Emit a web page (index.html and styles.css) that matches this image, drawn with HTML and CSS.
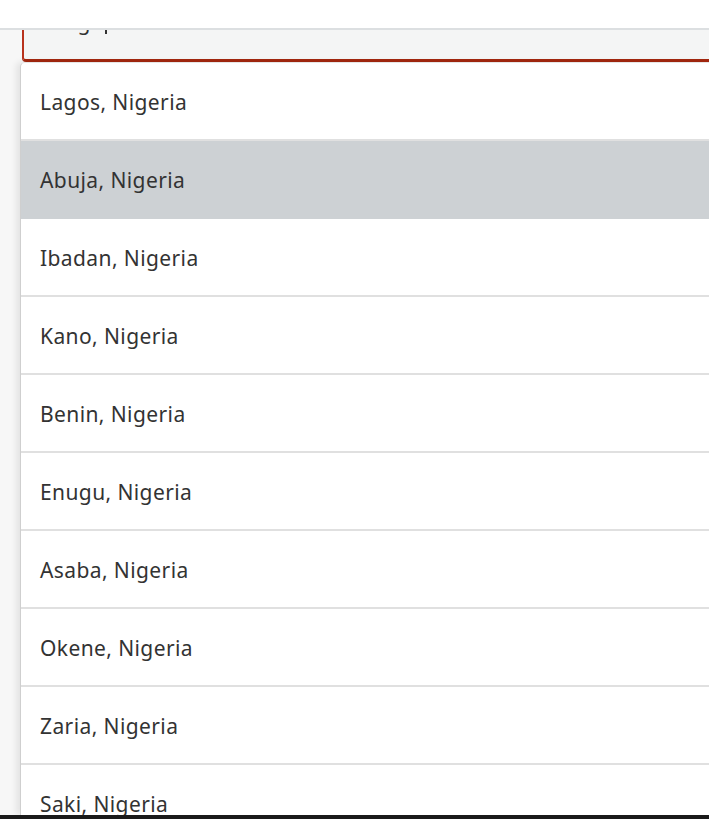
FILE: index.html
```html
<!DOCTYPE html>
<html lang="en">
<head>
  <meta charset="UTF-8" />
  <meta name="viewport" content="width=device-width, initial-scale=1.0"/>
  <title>Location search</title>
  <link rel="stylesheet" href="styles.css">
</head>
<body>

  <!-- top bar -->
  <div class="topbar"></div>

  <!-- search field (top half hidden under the bar) -->
  <div class="field-wrap">
    <div class="field">
      <span class="field-text">Lago</span><span class="caret"></span>
    </div>
  </div>

  <!-- suggestions -->
  <ul class="suggestions">
    <li>Lagos, Nigeria</li>
    <li class="active">Abuja, Nigeria</li>
    <li>Ibadan, Nigeria</li>
    <li>Kano, Nigeria</li>
    <li>Benin, Nigeria</li>
    <li>Enugu, Nigeria</li>
    <li>Asaba, Nigeria</li>
    <li>Okene, Nigeria</li>
    <li>Zaria, Nigeria</li>
    <li>Saki, Nigeria</li>
  </ul>

  <div class="taskbar"></div>

</body>
</html>
```

FILE: styles.css
```css
html, body {
  margin: 0;
  height: 100%;
  overflow: hidden;
}

body {
  font-family: "Noto Sans", Arial, sans-serif;
  background-color: #f7f7f7;
  display: flex;
  flex-direction: column;
}

.topbar {
  height: 28px;
  background: white;
  border-bottom: 2px solid #dcdfe1;
  flex: none;
}

.field-wrap {
  height: 32px;
  overflow: hidden;
  padding-left: 22px;
  display: flex;
  align-items: flex-end;
  flex: none;
}

.field {
  flex: 1;
  height: 60px;
  background: #f4f5f5;
  border-left: 2px solid #b8321c;
  border-bottom: 3px solid #a3270f;
  border-bottom-left-radius: 4px;
  box-sizing: border-box;
  padding: 0 0 0 30px;
  display: flex;
  align-items: center;
  font-size: 21px;
  letter-spacing: 0.4px;
  color: #333;
}

.field-text {
  transform: translateY(-9px);
}

.caret {
  width: 2px;
  height: 24px;
  margin-left: 1px;
  background: #333;
  transform: translateY(-9px);
}

.suggestions {
  list-style: none;
  margin: 0 0 0 20px;
  padding: 0;
  flex: 1;
  background: white;
  border-top: 1px solid #e6e6e6;
  border-left: 1px solid #cfcfcf;
  border-top-left-radius: 5px;
  box-shadow: -4px 0 6px rgba(0, 0, 0, 0.08);
  overflow: hidden;
}

.suggestions li {
  height: 76px;
  border-bottom: 2px solid #e0e0e0;
  display: flex;
  align-items: center;
  padding-left: 19px;
  padding-top: 1px;
  box-sizing: border-box;
  height: 78px;
  font-size: 21px;
  letter-spacing: 0.4px;
  color: #333;
}

.suggestions li.active {
  background-color: #cdd1d4;
  border-bottom-color: #cdd1d4;
}

.taskbar {
  height: 4px;
  background: #1a1a1a;
  flex: none;
}
```
